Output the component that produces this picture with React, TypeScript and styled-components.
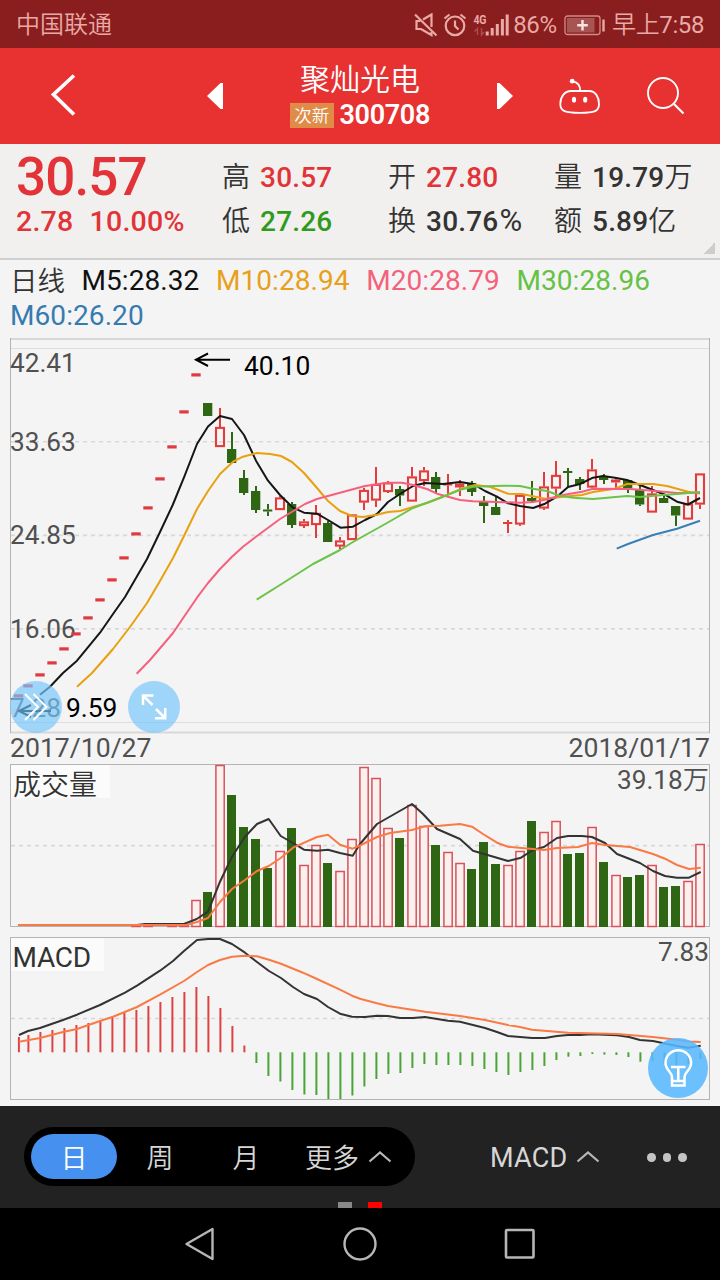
import React from "react";
import styled, { createGlobalStyle } from "styled-components";

const RED = "#e33c3c";
const GREEN = "#2f6613";

const GlobalStyle = createGlobalStyle`
  * { box-sizing: border-box; }
  body {
    margin: 0;
    background: #f4f4f4;
    font-family: Roboto, "Noto Sans CJK SC", sans-serif;
  }
  svg { display: block; flex: none; }
`;

const Screen = styled.div`
  width: 720px;
  height: 1280px;
  display: flex;
  flex-direction: column;
  overflow: hidden;
  background: #f4f4f4;
`;

const StatusBar = styled.div`
  height: 48px;
  flex: none;
  display: flex;
  align-items: center;
  padding: 2px 16px 0 16px;
  background: #8a1d1d;
  color: #e8aaa6;
  font-size: 24px;
  line-height: 46px;
`;

const Carrier = styled.span`
  flex: 1;
  font-weight: 350;
`;

const StatusText = styled.span<{ $left: number }>`
  margin-left: ${(p) => p.$left}px;
  font-weight: 400;
  letter-spacing: -0.4px;
`;

const TopBar = styled.header`
  height: 96px;
  flex: none;
  display: grid;
  grid-template-columns: 127px 163px 140px 115px 175px;
  background: #e83131;
  color: #fff;
`;

const TopSlot = styled.div<{ $pad?: number }>`
  padding-left: ${(p) => p.$pad ?? 0}px;
  display: flex;
  align-items: center;
`;

const TitleBlock = styled.div`
  display: flex;
  flex-direction: column;
  align-items: center;
`;

const StockName = styled.div`
  height: 50px;
  line-height: 63px;
  font-size: 30px;
  font-weight: 350;
`;

const CodeRow = styled.div`
  width: 140px;
  display: flex;
  align-items: center;
  gap: 6px;
`;

const NewTag = styled.span`
  width: 44px;
  height: 25px;
  margin-top: 2px;
  line-height: 26px;
  text-align: center;
  font-size: 17.5px;
  font-weight: 350;
  background: #e08c48;
`;

const Code = styled.span`
  font-size: 27px;
  font-weight: 600;
  line-height: 32px;
  letter-spacing: -0.35px;
  padding-top: 1px;
`;

const Quote = styled.section`
  height: 116px;
  flex: none;
  display: grid;
  grid-template-columns: 205px 166px 166px 166px;
  padding: 0 0 0 17px;
  background: #f1f0ee;
  border-bottom: 2px solid #cfcfcf;
  position: relative;
`;

const PriceBlock = styled.div`
  display: flex;
  flex-direction: column;
  color: #e13338;
`;

const Price = styled.div`
  height: 60px;
  padding-top: 6px;
  line-height: 54px;
  font-size: 53px;
  font-weight: 500;
  letter-spacing: -0.9px;
  margin-left: -1px;
`;

const Change = styled.div`
  display: flex;
  gap: 16px;
  padding-top: 1px;
  line-height: 34px;
  font-size: 28.5px;
  font-weight: 500;
  letter-spacing: 0.25px;
  margin-left: -1px;
`;

const StatColumn = styled.div`
  display: flex;
  flex-direction: column;
  padding-top: 12px;
`;

const Stat = styled.div`
  height: 44px;
  display: flex;
  align-items: center;
  gap: 10px;
  white-space: nowrap;
  color: #333;
  font-size: 28px;
  font-weight: 350;
  line-height: 44px;
`;

const StatValue = styled.span<{ $color?: string }>`
  color: ${(p) => p.$color ?? "#333"};
  font-weight: 500;
  letter-spacing: 0.2px;
`;

const Unit = styled.span`
  font-weight: 350;
`;

const Percent = styled.span`
  font-size: 31px;
  font-weight: 400;
  line-height: 1;
  margin-left: 1px;
`;

const Corner = styled.i`
  position: absolute;
  right: 5px;
  bottom: 4px;
  width: 12px;
  height: 12px;
  background: linear-gradient(135deg, transparent 50%, #cdcdcd 50%);
`;

const Legend = styled.div`
  height: 78px;
  flex: none;
  display: flex;
  flex-wrap: wrap;
  align-content: flex-start;
  column-gap: 16.5px;
  padding: 3px 10px 0 10px;
  font-size: 28px;
  line-height: 35px;
`;

const LegendItem = styled.span<{ $color: string }>`
  color: ${(p) => p.$color};
  letter-spacing: 0.08px;
`;

const PeriodName = styled.span`
  width: 55px;
  height: 35px;
  padding-top: 1px;
  font-size: 27.5px;
  font-weight: 350;
  white-space: nowrap;
  color: #333;
`;

const Panel = styled.div`
  position: relative;
  flex: none;
`;

const RoundButton = styled.button<{ $x: number; $y: number; $size: number; $bg: string }>`
  position: absolute;
  left: ${(p) => p.$x}px;
  top: ${(p) => p.$y}px;
  width: ${(p) => p.$size}px;
  height: ${(p) => p.$size}px;
  padding: 0;
  border: 0;
  border-radius: 50%;
  background: ${(p) => p.$bg};
`;

const DateRow = styled.div`
  height: 30px;
  flex: none;
  display: flex;
  justify-content: space-between;
  padding: 0 10px;
  font-size: 26.6px;
  line-height: 28px;
  color: #505050;
`;

const AxisText = styled.text`
  font-size: 26.2px;
  fill: #505050;
`;

const TitleText = styled.text`
  font-size: 28px;
  fill: #333;
`;

const Toolbar = styled.div`
  height: 102px;
  flex: none;
  display: flex;
  align-items: flex-start;
  padding: 21px 0 0 24px;
  background: #222;
  color: #d6d6d6;
  position: relative;
  font-size: 27px;
`;

const Segments = styled.div`
  width: 391px;
  height: 59px;
  border-radius: 30px;
  background: #000;
  display: flex;
  align-items: center;
  padding-left: 7px;
`;

const Segment = styled.div<{ $active?: boolean }>`
  width: 86px;
  height: 45px;
  border-radius: 23px;
  line-height: 50px;
  text-align: center;
  font-weight: 350;
  color: ${(p) => (p.$active ? "#fff" : "#d6d6d6")};
  background: ${(p) => (p.$active ? "#4691f0" : "transparent")};
`;

const MenuLabel = styled.div<{ $left: number }>`
  margin-left: ${(p) => p.$left}px;
  height: 59px;
  display: flex;
  align-items: center;
  gap: 9px;
  font-weight: 350;
`;

const MenuText = styled.span`
  line-height: 56px;
  padding-top: 4px;
`;

const IndicatorName = styled.span`
  font-weight: 400;
  line-height: 56px;
  padding-top: 3px;
  letter-spacing: 0.2px;
`;

const Dots = styled.div`
  display: flex;
  gap: 7px;
  margin: 26px 0 0 46.7px;
`;

const Dot = styled.i`
  width: 8.5px;
  height: 8.5px;
  border-radius: 50%;
  background: #c4c4c4;
`;

const Pager = styled.div`
  position: absolute;
  left: 338px;
  bottom: 0;
  display: flex;
  gap: 16px;
`;

const PageMark = styled.i<{ $on?: boolean }>`
  width: 14px;
  height: 6px;
  background: ${(p) => (p.$on ? "#f00" : "#888")};
`;

const NavBar = styled.nav`
  height: 72px;
  flex: none;
  display: flex;
  align-items: center;
  justify-content: center;
  gap: 127px;
  background: #000;
`;

/* ---- chart data, in page pixels ---- */

const cx = (k: number) => (k === 0 ? 18.5 : 28 + 12 * (k - 1));

const limitUps = [696, 686, 675, 663, 649, 634, 618, 600, 580, 558, 534, 508, 479, 447, 412, 375];

// [direction, body top, body bottom, wick top, wick bottom], starting with day 16
type Candle = ["u" | "d", number, number, number, number];
const candles: Candle[] = [
  ["d", 403, 416, 403, 416],
  ["u", 427, 447, 408, 447],
  ["d", 449, 463, 432, 463],
  ["d", 478, 493, 470, 495],
  ["d", 491, 510, 486, 513],
  ["d", 509.5, 511.5, 504, 516],
  ["u", 497.5, 510, 496, 510],
  ["d", 504, 525, 502, 528],
  ["u", 521.5, 526, 519, 528],
  ["u", 513, 525, 505, 538],
  ["d", 523, 542, 521, 542],
  ["u", 540.5, 546.5, 537, 549],
  ["u", 514.5, 540, 514.5, 540],
  ["u", 490, 502.5, 488, 510],
  ["u", 484, 500.5, 467, 507],
  ["u", 482.5, 492, 481, 493],
  ["d", 489, 495.5, 486, 506],
  ["u", 476.5, 501.5, 467, 501.5],
  ["u", 470.5, 481, 467, 486],
  ["d", 477, 489, 472, 493],
  ["u", 483.5, 485.5, 474, 494],
  ["u", 483.5, 487.5, 480, 496],
  ["d", 483, 492, 481, 496],
  ["d", 502, 506, 496, 523],
  ["d", 507, 515, 497, 515],
  ["u", 522, 524, 520, 533],
  ["u", 495, 524.5, 495, 526],
  ["d", 498, 501, 481, 503],
  ["u", 486.5, 508.5, 472, 510],
  ["u", 475, 488.5, 461, 496],
  ["d", 471, 473, 468, 487],
  ["d", 479, 484, 477, 490],
  ["u", 469.5, 487.5, 459, 488],
  ["d", 476, 480, 474, 484],
  ["u", 479.5, 482.5, 478, 490],
  ["d", 480, 488, 480, 493],
  ["d", 490, 504.5, 485, 506],
  ["u", 493.5, 512.5, 486, 512.5],
  ["d", 498, 503, 494, 503],
  ["d", 506, 515.5, 506, 526],
  ["u", 503.5, 519.5, 496, 519.5],
  ["u", 473.5, 504.5, 473.5, 509],
];

const ma5 =
  "40,694.7 50,686.7 63,673 77,660.7 100,632.7 113,614 125,597 136,578 147,559 160,532 172.7,505 184.3,476.7 197,444 208,426.5 220,416 232,419 244,435 256,460.7 268,480.7 280,495 293,507.7 304,512.7 317,513.7 328,520 340.5,527.7 353,526.7 365,520 377,514 388,502 400,494 413,486 425,483 443,484 460,482 473,484 485,491 497,496.7 508,503.3 520,506 533,508 545,503.7 557,496.7 568,487 580,484 593,477.7 603,476 615,477.7 627,480 640,485 653,490 665,494.7 677,501.7 688,504.5 700,498";
const ma10 =
  "77,686.7 92,673 113,649 130,627 147,603 160,581 173,558 184,536 197,509 208,491 220,474 233,461.7 243,456.7 257,453 270,454 281,456 292,462 304,473 317,488 328,501 340,511 352,516 363,517 377,514.7 388,512 400,511 413,507 427,503 443,496.7 461,489 475,485 490,486.7 508,493.7 522,494 545,498.7 563,496.7 582,495 593,492 615,488.7 627,484 653,484 667,486 688,491.7 700,493.5";
const ma20 =
  "136.7,673.7 150,660 173,633 184,616.7 197,597.7 208,583 220,569 232,556.7 243,546.7 257,536 280,519 295,510 305,504 317,499 340,492.7 365,486 387,482.7 402,482.7 413,485 427,489 437,493.7 460,500 473,501.3 497,502 520,502.7 533,502 545,499.7 563,495 582,491.7 593,488.7 630,489 653,490.7 677,493 700,492.7";
const ma30 =
  "256.7,599.7 280,585 313,564 340,550 353,542 387,523 413,508 427,502.7 443,496.7 461,489.5 473,486.7 503,485.7 520,486 533,488.7 547,491 560,495.7 573,497.7 593,499 627,496 640,497 663,495 680,493.7 700,492";
const ma60 = "616.7,548.7 628,544 653,535 677,528.7 700,520.7";

// volume bars as [day, direction, top]
const volumes: [number, "u" | "d", number][] = [
  [10, "u", 925], [11, "u", 925], [13, "u", 925], [14, "u", 924.5],
  [15, "u", 900], [16, "d", 892], [17, "u", 765], [18, "d", 795], [19, "d", 827],
  [20, "d", 839], [21, "d", 868], [22, "u", 851], [23, "d", 828], [24, "u", 865],
  [25, "u", 845], [26, "d", 863], [27, "u", 871], [28, "u", 839], [29, "u", 767],
  [30, "u", 778], [31, "u", 828], [32, "d", 838], [33, "u", 805], [34, "u", 826],
  [35, "d", 845], [36, "u", 852], [37, "u", 863], [38, "d", 869], [39, "d", 842],
  [40, "d", 864], [41, "u", 865], [42, "u", 851], [43, "d", 821], [44, "u", 832],
  [45, "u", 821], [46, "d", 854], [47, "d", 853], [48, "u", 827], [49, "d", 862],
  [50, "u", 875], [51, "d", 877], [52, "d", 875], [53, "u", 865], [54, "d", 887],
  [55, "d", 886], [56, "u", 881], [57, "u", 844],
];

const volMa5 =
  "18,925 137,925 145,924 184,924 196.7,919 208,911.7 220,881.7 232,856.7 245,836.7 257,824 268.7,819 280.7,836 293,843 304,849.7 317,850.7 328,849.7 340,853 352.7,855.7 360,844 377,824 412,804 423,814 437,829 460,839 473,850.7 508,861 521,857.7 533,850 544,847 557,838 568,836 582,836 592,837 605,843 617,854 640,863 653,871 665,876 677,877.7 689,877.7 700.7,872";
const volMa10 =
  "18,925 186,925 197,922 208,918 220,902 232,889 245,880 257,871 268.7,866 280.7,858 293,847.7 317,837 328,834.7 340,844.7 352.7,848.7 360,845.5 377,837 390,833 412,830 425,826.3 440,825.7 460,824 472,826.7 483,834 497,842.7 508,846.7 533,849 544,850 557,848 578,847 592,843 605,845 630,847 653,854 665,858.7 677,865 689,869 700.7,867.7";

const macdEnds = [
  1037, 1035, 1032, 1030, 1028, 1025, 1023, 1021, 1017, 1013, 1010, 1006, 1002, 997, 992, 987,
  996, 1008, 1026, 1045.5, 1063, 1076, 1081.5, 1090, 1094.5, 1095, 1099, 1099, 1095.5, 1086.5,
  1079, 1074, 1073, 1068, 1064, 1065, 1065, 1065, 1066, 1069, 1072, 1075, 1072, 1070, 1066, 1060,
  1056.7, 1056, 1054, 1054.6, 1055, 1057, 1061.7, 1061, 1064, 1066, 1064, 1059,
];
const dif =
  "19,1035 28,1031 40,1028 63,1020 77,1014.7 100,1005 125,992.7 137,985.7 160,970.7 173,961 184,951 197,940 208,939 220,939 232,944 245,952.7 257,962 269,971 281,978 293,987 304,994 317,999 328,1007 340,1013.7 352,1016.7 365,1017 377,1015.7 388,1016 400,1018 413,1018 425,1017 448,1020.7 460,1021.7 485,1028 497,1032 508,1036 532,1038 545,1038 557,1036 568,1035 580,1035 592,1034.3 617,1035.3 629,1037 640,1040 653,1041 677,1046 688,1047.7 700.7,1045.7";
const dea =
  "19,1041.7 40,1038 63,1032 77,1029 100,1021 113,1016.7 137,1007 160,994.7 184,981 197,972 208,965 220,960 232,956.7 245,955.7 257,956.3 269,959.7 281,963.7 303,972.7 317,979 340,989.7 352,995.7 360,998.7 375,1002.7 388,1006 425,1011.7 460,1016 485,1020 508,1025 520,1027 532,1029.7 568,1032.7 617,1034 653,1037 677,1039.7 688,1041.5 700.7,1042";

const Line = ({ points, color }: { points: string; color: string }) => (
  <polyline points={points} fill="none" stroke={color} strokeWidth="2" strokeLinejoin="round" />
);

const GridLine = ({ y }: { y: number }) => (
  <line x1="11" x2="709" y1={y} y2={y} stroke="#d8d8d8" strokeWidth="1.6" strokeDasharray="4 4" />
);

const PriceChart = () => (
  <svg width="720" height="396" viewBox="0 338 720 396">
    <path d="M10 338.9H710M10 732.4H710" stroke="#d8d8d8" strokeWidth="2" />
    <path d="M11 348.5H709M11 722.5H709" stroke="#dedede" />
    <path d="M10.5 338V733M709.5 338V733" stroke="#b4b4b4" />
    {[441.7, 535.4, 628.9].map((y) => <GridLine key={y} y={y} />)}
    <AxisText x="10" y="371.5">42.41</AxisText>
    <AxisText x="10" y="451">33.63</AxisText>
    <AxisText x="10" y="544">24.85</AxisText>
    <AxisText x="10" y="638">16.06</AxisText>
    <AxisText x="10" y="717">7.28</AxisText>
    {limitUps.map((y, k) => (
      <rect key={k} x={cx(k) - 4.7} y={y - 1.7} width="9.4" height="3.2" fill="#e03a41" />
    ))}
    {candles.map(([dir, top, bottom, high, low], i) => {
      const x = cx(i + 16);
      const up = dir === "u";
      const h = bottom - top;
      return (
        <g key={i}>
          <path
            d={`M${x} ${high}V${top}M${x} ${bottom}V${low}`}
            stroke={up ? RED : GREEN}
            strokeWidth="2"
          />
          {up && h > 4 ? (
            <rect x={x - 4} y={top + 0.9} width="8" height={h - 1.8} fill="none" stroke={RED} strokeWidth="2.1" />
          ) : (
            <rect x={x - 5} y={top} width="9.3" height={h} fill={up ? RED : GREEN} />
          )}
        </g>
      );
    })}
    <Line points={ma5} color="#161616" />
    <Line points={ma10} color="#e8a00f" />
    <Line points={ma20} color="#f6607e" />
    <Line points={ma30} color="#6bc448" />
    <Line points={ma60} color="#3a7fb5" />
    <g fill="none" stroke="#000" strokeWidth="2">
      <path d="M230 359.7H196M208 353.5L196 359.7L208 366" />
      <path d="M51 711H19M31 705L19 711L31 717" />
    </g>
    <text x="244" y="375" fontSize="26.4" fill="#000">40.10</text>
    <text x="66" y="717" fontSize="26.4" fill="#000">9.59</text>
  </svg>
);

const VolumeChart = () => (
  <svg width="720" height="166" viewBox="0 764 720 166">
    <rect x="10.5" y="764.5" width="699" height="162" fill="none" stroke="#b4b4b4" />
    <GridLine y={845.6} />
    <rect x="11" y="765" width="99" height="33" fill="#fbfbfb" />
    {volumes.map(([k, dir, top]) =>
      dir === "u" ? (
        <rect key={k} x={cx(k) - 4.1} y={top + 0.5} width="8.3" height={926.5 - top - 0.5} fill="#faf1ef" stroke="#d9525a" strokeWidth="1.5" />
      ) : (
        <rect key={k} x={cx(k) - 5} y={top} width="9" height={927 - top} fill={GREEN} />
      )
    )}
    <Line points={volMa5} color="#333" />
    <Line points={volMa10} color="#f97a45" />
    <TitleText x="13" y="795" fontWeight="350">成交量</TitleText>
    <AxisText x="709" y="788.5" textAnchor="end">39.18<tspan fontWeight="350">万</tspan></AxisText>
  </svg>
);

const MacdChart = () => (
  <svg width="720" height="176" viewBox="0 930 720 176">
    <rect x="10.5" y="937.5" width="699" height="162" fill="none" stroke="#b4b4b4" />
    <GridLine y={1018.5} />
    <rect x="11" y="938" width="93" height="33" fill="#fbfbfb" />
    {macdEnds.map((end, k) => (
      <path key={k} d={`M${cx(k) + 0.4} 1052.3V${end}`} stroke={k < 20 ? "#dd4242" : "#4aa336"} strokeWidth="2" />
    ))}
    <Line points={dif} color="#333" />
    <Line points={dea} color="#f97a45" />
    <TitleText x="12.5" y="967" textLength="78.5">MACD</TitleText>
    <AxisText x="709" y="961" textAnchor="end">7.83</AxisText>
  </svg>
);

const MuteIcon = () => (
  <svg width="24" height="24" viewBox="0 0 24 24" fill="none" stroke="#e8aaa6" strokeWidth="2.2">
    <path d="M1 1.5L22.5 22.5" />
    <path d="M9 6.5L17.5 1.5V14M6.5 8H2.5V16H7L17.5 22V19" />
  </svg>
);

const AlarmIcon = () => (
  <svg width="24" height="24" viewBox="0 0 24 24" fill="none" stroke="#e8aaa6" strokeWidth="2.2">
    <circle cx="12" cy="12.8" r="9.3" />
    <path d="M12 7.5V13L15.5 16.5M1.5 5.5L6.5 1.5M22.5 5.5L17.5 1.5" />
  </svg>
);

const SignalIcon = () => (
  <svg width="37" height="24" viewBox="0 0 37 24">
    <text x="0.5" y="10.5" fontSize="12.5" fontWeight="700" textLength="12.5" lengthAdjust="spacingAndGlyphs" fill="#e8aaa6">4G</text>
    <path d="M4.5 22V15.5L1.5 18.5M8.5 15V22L11 19" fill="none" stroke="#a94c4a" strokeWidth="1.5" />
    <path d="M14.2 22.5V18.5M19.2 22.5V15M24.3 22.5V11M29.4 22.5V6M34.2 22.5V1.5" stroke="#e8aaa6" strokeWidth="3" />
  </svg>
);

const BatteryIcon = () => (
  <svg width="42" height="21" viewBox="0 0 42 21">
    <rect x="1" y="1" width="35" height="18.5" rx="2.5" fill="none" stroke="#d08c89" strokeWidth="1.3" />
    <rect x="3" y="3" width="27.5" height="14.5" fill="#a75553" />
    <path d="M18.5 5V15.5M13.2 10.2H23.8" stroke="#fbe3e1" strokeWidth="2.4" />
    <path d="M39.5 4.5V16.5" stroke="#e8aaa6" strokeWidth="2.4" />
  </svg>
);

const RobotIcon = () => (
  <svg width="42" height="38" viewBox="0 0 42 38" fill="none" stroke="#fff" strokeWidth="1.8">
    <path d="M12 14H30C36.5 14 40 20 40 27C40 34.2 36 35.9 21 35.9C6 35.9 1.3 34.2 1.3 27C1.3 20 5.5 14 12 14Z" />
    <path d="M21.2 14C21.2 8 19 5 13.5 4.3" />
    <circle cx="13.2" cy="4.2" r="2.4" fill="#fff" stroke="none" />
    <ellipse cx="15" cy="22.7" rx="2.1" ry="2.9" fill="#fff" stroke="none" />
    <ellipse cx="26.2" cy="22.7" rx="2.1" ry="2.9" fill="#fff" stroke="none" />
  </svg>
);

const SearchIcon = () => (
  <svg width="38" height="38" viewBox="0 0 38 38" fill="none" stroke="#fff" strokeWidth="1.9">
    <circle cx="16" cy="16" r="15" />
    <path d="M27 27L36.5 36.5" strokeWidth="2.2" />
  </svg>
);

const CaretUp = () => (
  <svg width="24" height="12" viewBox="0 0 24 12" fill="none" stroke="#b8b8b8" strokeWidth="2.2">
    <path d="M1.5 10.5L12 1.5L22.5 10.5" />
  </svg>
);

export default function App() {
  return (
    <>
      <GlobalStyle />
      <Screen>
        <StatusBar>
          <Carrier>中国联通</Carrier>
          <MuteIcon />
          <StatusText $left={5}><AlarmIcon /></StatusText>
          <StatusText $left={6}><SignalIcon /></StatusText>
          <StatusText $left={3}>86%</StatusText>
          <StatusText $left={7}><BatteryIcon /></StatusText>
          <StatusText $left={6.5}><Unit>早上</Unit>7:58</StatusText>
        </StatusBar>

        <TopBar>
          <TopSlot $pad={50}>
            <svg width="26" height="44" viewBox="0 0 26 44" fill="none" stroke="#fff" strokeWidth="3.7">
              <path d="M24 1.5L3.5 20.5L24 40.5" />
            </svg>
          </TopSlot>
          <TopSlot $pad={79}>
            <svg width="18" height="28" viewBox="0 0 18 28" fill="#fff">
              <path d="M17 1V27H14.5L1 14L14.5 1Z" />
            </svg>
          </TopSlot>
          <TitleBlock>
            <StockName>聚灿光电</StockName>
            <CodeRow>
              <NewTag>次新</NewTag>
              <Code>300708</Code>
            </CodeRow>
          </TitleBlock>
          <TopSlot $pad={66}>
            <svg width="18" height="28" viewBox="0 0 18 28" fill="#fff">
              <path d="M1 1V27H3.5L17 14L3.5 1Z" />
            </svg>
          </TopSlot>
          <TopSlot $pad={14}>
            <RobotIcon />
            <TopSlot $pad={46}><SearchIcon /></TopSlot>
          </TopSlot>
        </TopBar>

        <Quote>
          <PriceBlock>
            <Price>30.57</Price>
            <Change><span>2.78</span><span>10.00%</span></Change>
          </PriceBlock>
          <StatColumn>
            <Stat>高<StatValue $color="#e13338">30.57</StatValue></Stat>
            <Stat>低<StatValue $color="#2f9a1c">27.26</StatValue></Stat>
          </StatColumn>
          <StatColumn>
            <Stat>开<StatValue $color="#e13338">27.80</StatValue></Stat>
            <Stat>换<StatValue>30.76<Percent>%</Percent></StatValue></Stat>
          </StatColumn>
          <StatColumn>
            <Stat>量<StatValue>19.79<Unit>万</Unit></StatValue></Stat>
            <Stat>额<StatValue>5.89<Unit>亿</Unit></StatValue></Stat>
          </StatColumn>
          <Corner />
        </Quote>

        <Legend>
          <PeriodName>日线</PeriodName>
          <LegendItem $color="#111">M5:28.32</LegendItem>
          <LegendItem $color="#e8a01a">M10:28.94</LegendItem>
          <LegendItem $color="#f4617b">M20:28.79</LegendItem>
          <LegendItem $color="#65c244">M30:28.96</LegendItem>
          <LegendItem $color="#367bb0">M60:26.20</LegendItem>
        </Legend>

        <Panel>
          <PriceChart />
          <RoundButton $x={10} $y={343} $size={52} $bg="rgba(120, 198, 252, 0.68)">
            <svg width="52" height="52" viewBox="0 0 52 52" fill="none" stroke="#fff" strokeWidth="1.9">
              <path d="M15 13L28 26L15 39M23.5 13L36.5 26L23.5 39" />
            </svg>
          </RoundButton>
          <RoundButton $x={128} $y={343} $size={52} $bg="rgba(120, 198, 252, 0.68)">
            <svg width="52" height="52" viewBox="0 0 52 52" fill="none" stroke="#fff" strokeWidth="2.5">
              <path d="M15 24V14.5H25.5M15 14.5L24.5 24M28 28L37 37M27 37.2H37.2V27" />
            </svg>
          </RoundButton>
        </Panel>

        <DateRow>
          <span>2017/10/27</span>
          <span>2018/01/17</span>
        </DateRow>

        <Panel>
          <VolumeChart />
        </Panel>

        <Panel>
          <MacdChart />
          <RoundButton $x={648} $y={108} $size={60} $bg="rgba(88, 184, 255, 0.87)">
            <svg width="60" height="60" viewBox="0 0 60 60" fill="none" stroke="#fff" strokeWidth="2.5">
              <path d="M24 39C24 34 17.5 32 17.5 25A12.8 12.8 0 0 1 43.1 25C43.1 32 36.5 34 36.5 39V47.5H24ZM24 43H36.5" />
              <path d="M23 29H37.5M30.3 29V43" />
            </svg>
          </RoundButton>
        </Panel>

        <Toolbar>
          <Segments>
            <Segment $active>日</Segment>
            <Segment>周</Segment>
            <Segment>月</Segment>
            <MenuLabel $left={16}><MenuText>更多</MenuText><CaretUp /></MenuLabel>
          </Segments>
          <MenuLabel $left={75}><IndicatorName>MACD</IndicatorName><CaretUp /></MenuLabel>
          <Dots><Dot /><Dot /><Dot /></Dots>
          <Pager><PageMark /><PageMark $on /></Pager>
        </Toolbar>

        <NavBar>
          <svg width="32" height="36" viewBox="0 0 32 36" fill="none" stroke="#b6b6b6" strokeWidth="2.4" strokeLinejoin="round">
            <path d="M28.5 3V33L2.5 18Z" />
          </svg>
          <svg width="34" height="34" viewBox="0 0 34 34" fill="none" stroke="#b6b6b6" strokeWidth="2.4">
            <circle cx="17" cy="17" r="15.5" />
          </svg>
          <svg width="32" height="32" viewBox="0 0 32 32" fill="none" stroke="#b6b6b6" strokeWidth="2.6">
            <rect x="2" y="2" width="27.5" height="27.5" rx="1" />
          </svg>
        </NavBar>
      </Screen>
    </>
  );
}
